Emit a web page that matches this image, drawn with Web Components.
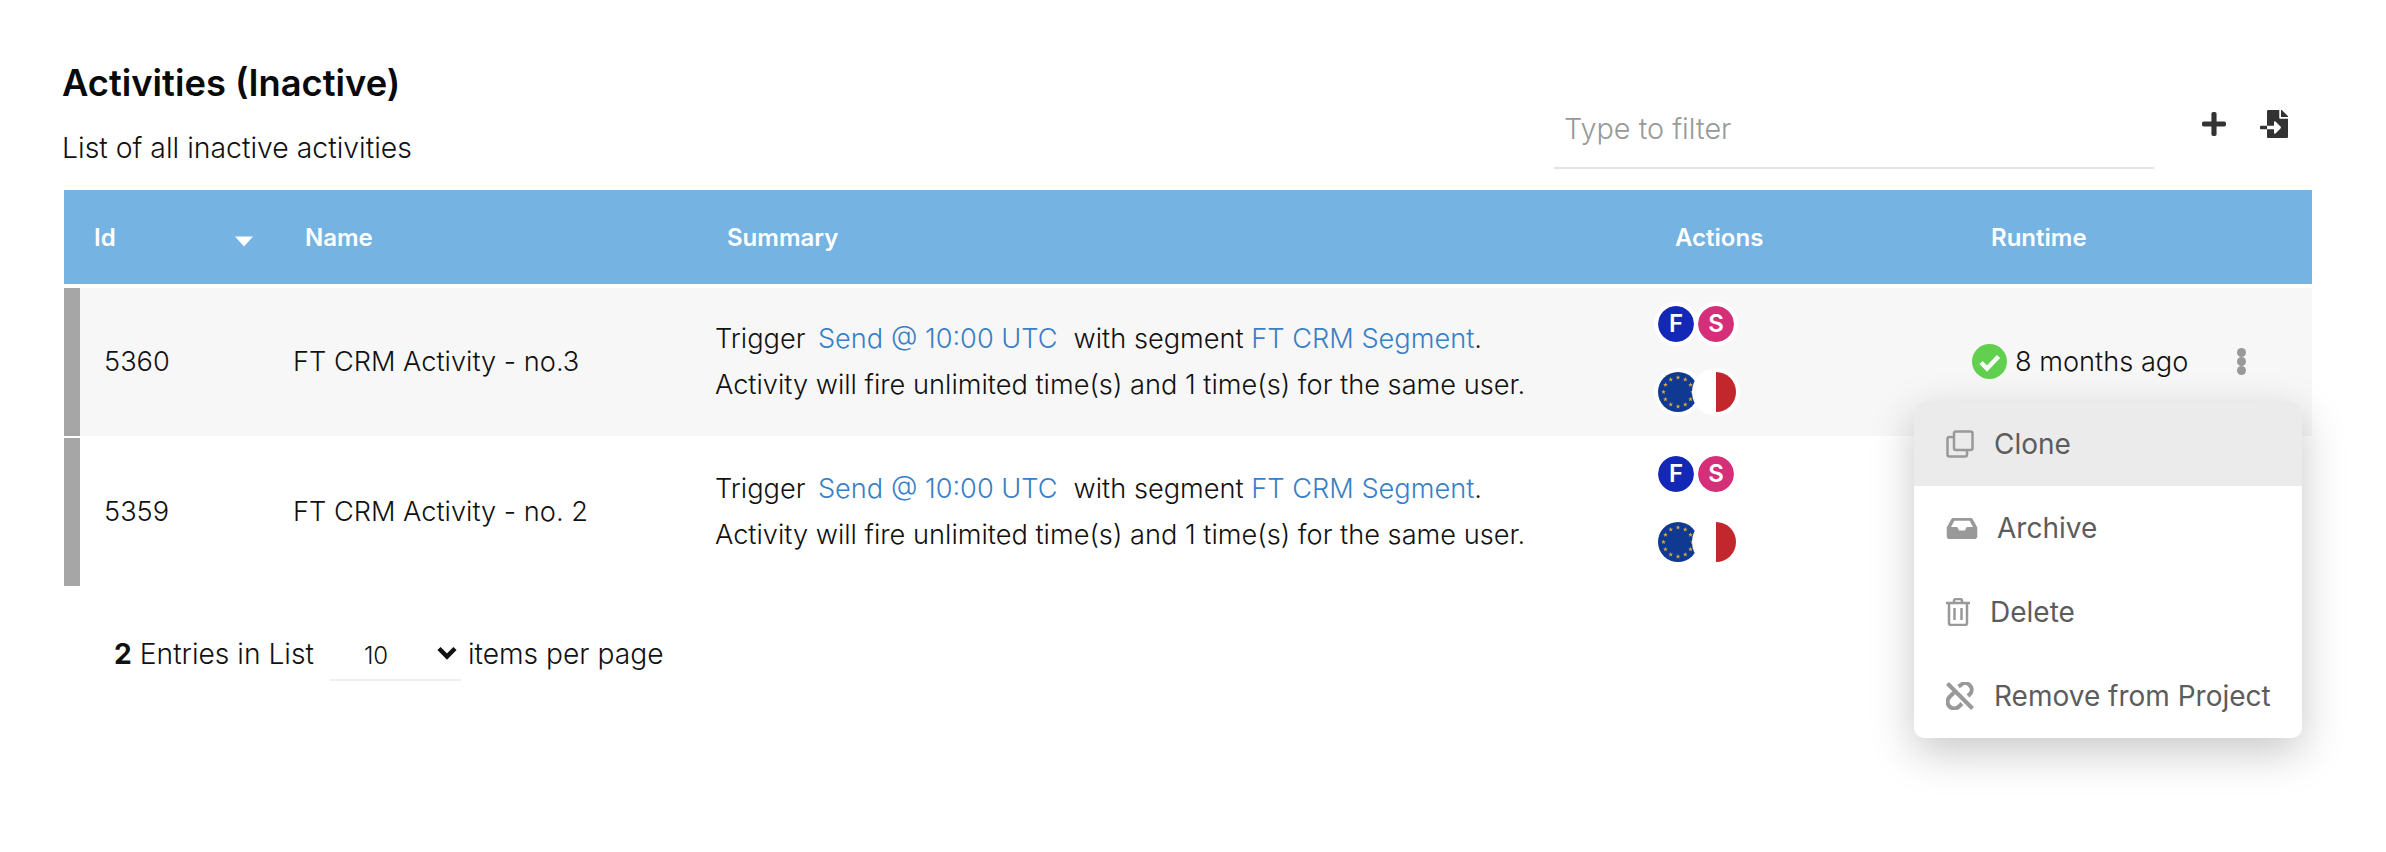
<!DOCTYPE html>
<html><head><meta charset="utf-8"><title>Activities</title>
<style>
html,body{margin:0;padding:0;background:#fff}
body{width:2386px;height:852px;overflow:hidden;font-family:Inter,"Liberation Sans",sans-serif;color:#111}
</style></head><body>
<activities-page></activities-page>

<template id="t-page">
<style>
:host{display:block;position:relative;width:2386px;height:852px;box-sizing:border-box;padding:58px 74px 0 64px;font-family:Inter,"Liberation Sans",sans-serif}
.top{display:flex;height:132px}
.heading{flex:1;margin-left:-2px}
h1{margin:0;font-size:36.3px;line-height:50px;font-weight:600;color:#0a0a0a}
p{margin:21px 0 0;font-size:28.4px;line-height:38px;font-weight:300;color:#111}
.tools{display:flex;align-items:flex-start}
.filter{width:600px;height:51px;margin-top:58px;border-bottom:2px solid #e3e3e3;display:flex;align-items:flex-start}
input{width:100%;border:0;outline:0;background:none;padding:0 10px;margin-top:-8px;height:40px;font:300 28.8px Inter,"Liberation Sans",sans-serif;color:#111}
input::placeholder{color:#999;opacity:1}
.ic{display:flex;gap:34px;margin:52px 24px 0 48px;align-items:center}
svg{display:block;fill:#333}
.foot{display:flex;align-items:center;height:100px;margin-top:18px;padding-left:50px;font-size:28.2px;font-weight:300;color:#111}
b{font-weight:700;margin-right:8px}
.sel{position:relative;display:block;margin:2px 7px 0 16px;width:131px;height:52px}
select{appearance:none;-webkit-appearance:none;width:131px;height:52px;border:0;border-radius:0;border-bottom:2px solid #efefef;background:#fff;padding:2px 6px 0 34px;font:300 24px Inter,"Liberation Sans",sans-serif;color:#111;outline:0}
.sel svg{position:absolute;right:4px;top:17px;fill:none;stroke:#111;stroke-width:4.500;pointer-events:none}
</style>
<div class="top">
  <div class="heading"><h1>Activities (Inactive)</h1><p>List of all inactive activities</p></div>
  <div class="tools">
    <div class="filter"><input type="text" placeholder="Type to filter" aria-label="Type to filter"></div>
    <div class="ic">
      <svg width="24" height="24" viewBox="0 0 448 448"><path d="M416 176H272V32c0-17.67-14.33-32-32-32h-32c-17.67 0-32 14.33-32 32v144H32c-17.67 0-32 14.33-32 32v32c0 17.67 14.33 32 32 32h144v144c0 17.67 14.33 32 32 32h32c17.67 0 32-14.33 32-32V272h144c17.67 0 32-14.33 32-32v-32c0-17.67-14.33-32-32-32z"/></svg>
      <svg width="28" height="28" viewBox="0 0 512 512"><path d="M16 288c-8.800 0-16 7.200-16 16v32c0 8.800 7.200 16 16 16h112v-64zm489-183L407.100 7c-4.500-4.500-10.600-7-17-7H384v128h128v-6.100c0-6.300-2.500-12.400-7-16.900zm-153 31V0H152c-13.300 0-24 10.700-24 24v264h128v-65.200c0-14.300 17.300-21.400 27.400-11.300L379 308c6.600 6.700 6.600 17.400 0 24l-95.700 96.400c-10.100 10.100-27.400 3-27.400-11.300V352H128v136c0 13.300 10.700 24 24 24h336c13.300 0 24-10.700 24-24V160H376c-13.200 0-24-10.800-24-24z"/></svg>
    </div>
  </div>
</div>
<activity-head></activity-head>
<activity-row shaded aid="5360" name="FT CRM Activity - no.3" kebab></activity-row>
<activity-row aid="5359" name="FT CRM Activity - no. 2"></activity-row>
<div class="foot"><b>2</b><span>Entries in List</span>
  <span class="sel"><select aria-label="items per page"><option>10</option><option>25</option><option>50</option></select><svg width="20" height="14" viewBox="0 0 20 14"><path d="M2 2.500l8 8 8-8"/></svg></span>
  <span>items per page</span></div>
<action-menu></action-menu>
</template>

<template id="t-head">
<style>
:host{display:grid;grid-template-columns:217px 422px 942px 315px 352px;align-items:center;height:94px;background:#75b3e2;color:#fff;font-size:24px;font-weight:600;margin-bottom:4px}
div{padding-left:24px;padding-top:1px}
.id{padding-left:30px;display:flex;justify-content:space-between;align-items:center;padding-right:27px}
.id svg{display:block;fill:#fff;margin-top:7px}
.w{padding-left:31px}
.a{padding-left:30px}
</style>
<div class="id"><span>Id</span><svg width="20" height="12" viewBox="0 0 20 12"><path d="M1 1.500h18L10 11.500z"/></svg></div>
<div>Name</div><div>Summary</div><div class="a">Actions</div><div class="w">Runtime</div>
</template>

<template id="t-row">
<style>
:host{display:grid;grid-template-columns:201px 422px 942px 315px 352px;align-items:center;height:148px;margin-bottom:2px;font-size:27.2px;font-weight:300;color:#111;border-left:16px solid #a6a6a6;box-sizing:border-box;background:#fff;position:relative}
:host([shaded]){background:#f7f7f7}
.cell{padding-left:12px;margin-top:-2px}
.id{padding-left:24px}
.sum{margin-top:-2px}
.ln{display:flex;height:46px;align-items:center;white-space:pre}
a{color:#3a7fc4;text-decoration:none;font-weight:300}
.gap{margin:0 16px 0 12.500px}
.bs{display:grid;row-gap:22px;padding-left:9px;margin-top:-6px}
.status{display:flex;align-items:center;gap:8px;padding-left:12px;margin-top:-2px}
.status svg{fill:#62d04f;display:block}
.kebab{display:flex;flex-direction:column;gap:0;margin-left:41px;visibility:hidden}
:host([kebab]) .kebab{visibility:visible}
.kebab i{display:block;width:9px;height:9px;border-radius:50%;background:#999}
</style>
<div class="cell id" id="i"></div>
<div class="cell" id="n"></div>
<div class="cell sum">
  <div class="ln"><span>Trigger</span><a class="gap" href="#">Send @ 10:00 UTC</a><span>with segment </span><a href="#">FT CRM Segment</a><span>.</span></div>
  <div class="ln"><span>Activity will fire unlimited time(s) and 1 time(s) for the same user.</span></div>
</div>
<div class="bs"><badge-pair></badge-pair><flag-pair></flag-pair></div>
<div class="status">
  <svg width="35" height="35" viewBox="0 0 35 35"><circle cx="17.500" cy="17.500" r="17.500"/><path d="M9 18.500l6 6L26.500 12.500" fill="none" stroke="#fff" stroke-width="4.500"/></svg>
  <span>8 months ago</span>
  <span class="kebab" aria-hidden="true"><i></i><i></i><i></i></span>
</div>
</template>

<template id="t-badges">
<style>
:host{display:flex;height:44px}
span{width:36px;height:36px;border:4px solid #fff;border-radius:50%;color:#fff;font:600 24px/36px Inter,"Liberation Sans",sans-serif;text-align:center;background-clip:padding-box;box-sizing:content-box;flex:none}
.f{background-color:#1428b8}
.s{background-color:#d42f78;margin-left:-4px}
</style>
<span class="f">F</span><span class="s">S</span>
</template>

<template id="t-flags">
<style>
:host{display:flex;height:48px;align-items:center}
svg{display:block;flex:none}
</style>
<svg width="90" height="48" viewBox="0 0 90 48">
  <circle cx="24" cy="24" r="24" fill="#fff"/>
  <circle cx="24" cy="24" r="20" fill="#103a92"/>
  <g fill="#d9a93c" id="stars"></g>
  <circle cx="62" cy="24" r="24" fill="#fff"/>
  <path d="M62 4a20 20 0 0 1 0 40z" fill="#c1272d"/>
</svg>
</template>

<template id="t-menu">
<style>
:host{display:block;position:absolute;left:1914px;top:402px;width:388px;border-radius:10px;background:#fff;box-shadow:0 14px 44px rgba(0,0,0,.22);overflow:hidden;font-size:28px;font-weight:300;color:#555}
.it{display:flex;align-items:center;height:84px;padding-left:32px;box-sizing:border-box}
.it.on{background:#ebebeb}
svg{display:block;flex:none}
.it span{font-weight:400;color:#5c5c5c}
</style>
<div class="it on"><svg width="28" height="28" viewBox="0 0 28 28" fill="none" stroke="#999" stroke-width="2.500" style="margin-right:20px"><rect x="8" y="1.500" width="18.500" height="18.500" rx="2"/><path d="M8 7H3.500a2 2 0 0 0-2 2v15.500a2 2 0 0 0 2 2H19a2 2 0 0 0 2-2V20"/></svg><span>Clone</span></div>
<div class="it"><svg width="32" height="21" viewBox="0 0 32 22" style="margin-right:19px"><path fill="#999" d="M7 0h18c1 0 1.800.5 2.300 1.300L32 10v9c0 1.700-1.300 3-3 3H3c-1.700 0-3-1.300-3-3v-9L4.700 1.300C5.200.5 6 0 7 0zm1 3L4.500 9.500H11l2 3.500h6l2-3.500h6.500L24 3z"/></svg><span>Archive</span></div>
<div class="it"><svg width="24" height="28" viewBox="0 0 24 28" fill="none" stroke="#999" stroke-width="2.500" style="margin-right:20px"><path d="M0 5h24M3 5v20a2 2 0 0 0 2 2h14a2 2 0 0 0 2-2V5M8 5V3a2 2 0 0 1 2-2h4a2 2 0 0 1 2 2v2M8.500 10v12M15.500 10v12"/></svg><span>Delete</span></div>
<div class="it"><svg width="28" height="28" viewBox="0 0 28 28" fill="none" stroke="#999" stroke-width="4" style="margin-right:20px"><path d="M1.500 1.500l25 25"/><path d="M12.500 4.500L15 2.800a6.500 6.500 0 0 1 9.500 8.700L22 14"/><path d="M8 10.500L3.500 15a6.500 6.500 0 0 0 9.500 9.500L16 21.500"/></svg><span>Remove from Project</span></div>
</template>

<script>
function mount(el,id){const r=el.attachShadow({mode:'open'});r.appendChild(document.getElementById(id).content.cloneNode(true));return r;}
customElements.define('activities-page',class extends HTMLElement{constructor(){super();mount(this,'t-page');}});
customElements.define('activity-head',class extends HTMLElement{constructor(){super();mount(this,'t-head');}});
customElements.define('activity-row',class extends HTMLElement{constructor(){super();this.r=mount(this,'t-row');}
 connectedCallback(){this.r.getElementById('i').textContent=this.getAttribute('aid');this.r.getElementById('n').textContent=this.getAttribute('name');}});
customElements.define('badge-pair',class extends HTMLElement{constructor(){super();mount(this,'t-badges');}});
customElements.define('flag-pair',class extends HTMLElement{constructor(){super();const r=mount(this,'t-flags');const g=r.getElementById('stars');let s='';
 for(let i=0;i<12;i++){const a=i*Math.PI/6,cx=24+14.5*Math.sin(a),cy=24-14.5*Math.cos(a);let p=[];
  for(let k=0;k<10;k++){const b=k*Math.PI/5,q=k%2?1:2.5;p.push((cx+q*Math.sin(b)).toFixed(2)+','+(cy-q*Math.cos(b)).toFixed(2));}
  s+='<polygon points="'+p.join(' ')+'"/>';}
 g.innerHTML=s;}});
customElements.define('action-menu',class extends HTMLElement{constructor(){super();mount(this,'t-menu');}});
</script>
</body></html>
